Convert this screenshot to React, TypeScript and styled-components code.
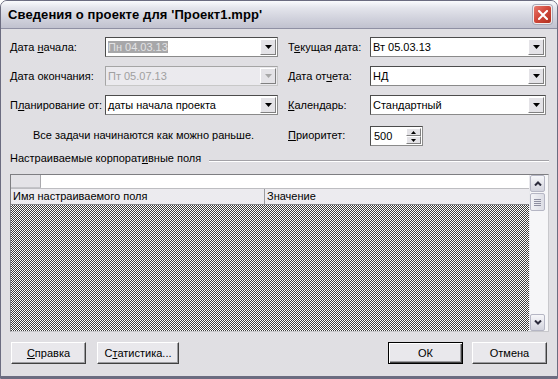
import styled, { createGlobalStyle } from "styled-components";

const GlobalStyle = createGlobalStyle`
  html, body { margin: 0; padding: 0; background: #fff; }
  body { font-family: "Liberation Sans", Arial, sans-serif; font-size: 11px; color: #000; }
  * { box-sizing: border-box; }
`;

function ComboArrow({ disabled }: { disabled?: boolean }) {
  return (
    <svg width="7" height="4" viewBox="0 0 7 4">
      <polygon points="0,0 7,0 3.5,4" fill={disabled ? "#a8a8a8" : "#000"} />
    </svg>
  );
}

function SpinArrow({ up }: { up?: boolean }) {
  return (
    <svg width="5" height="3" viewBox="0 0 5 3">
      <polygon points={up ? "0,3 5,3 2.5,0" : "0,0 5,0 2.5,3"} fill="#000" />
    </svg>
  );
}

function Chevron({ up }: { up?: boolean }) {
  return (
    <svg width="8" height="5" viewBox="0 0 8 5">
      <polyline
        points={up ? "1,4.5 4,1.5 7,4.5" : "1,0.5 4,3.5 7,0.5"}
        fill="none"
        stroke="#2b2b3c"
        strokeWidth="2"
      />
    </svg>
  );
}

function CloseGlyph() {
  return (
    <svg width="10" height="10" viewBox="0 0 10 10">
      <path d="M1 1 L9 9 M9 1 L1 9" stroke="#fff" strokeWidth="2" strokeLinecap="square" />
    </svg>
  );
}

function Combo({
  value,
  disabled,
  selected,
}: {
  value: string;
  disabled?: boolean;
  selected?: boolean;
}) {
  return (
    <ComboBox $disabled={disabled}>
      <ComboText $disabled={disabled}>
        {selected ? <Selected>{value}</Selected> : value}
      </ComboText>
      <DropButton>
        <ComboArrow disabled={disabled} />
      </DropButton>
    </ComboBox>
  );
}

export default function App() {
  return (
    <>
      <GlobalStyle />
      <Window>
        <TitleBar>
          <Title>Сведения о проекте для 'Проект1.mpp'</Title>
          <CloseButton>
            <CloseGlyph />
          </CloseButton>
        </TitleBar>
        <Body>
          <Form>
            <Label>
              Дата <Key>н</Key>ачала:
            </Label>
            <Combo value="Пн 04.03.13" selected />
            <Label $right>
              Т<Key>е</Key>кущая дата:
            </Label>
            <Combo value="Вт 05.03.13" />

            <Label>
              <Key>Д</Key>ата окончания:
            </Label>
            <Combo value="Пт 05.07.13" disabled />
            <Label $right>
              Дата от<Key>ч</Key>ета:
            </Label>
            <Combo value="НД" />

            <Label>
              П<Key>л</Key>анирование от:
            </Label>
            <Combo value="даты начала проекта" />
            <Label $right>
              <Key>К</Key>алендарь:
            </Label>
            <Combo value="Стандартный" />

            <Note>Все задачи начинаются как можно раньше.</Note>
            <Label $right>
              <Key>П</Key>риоритет:
            </Label>
            <SpinBox>
              <SpinText>500</SpinText>
              <SpinButtons>
                <SpinButton>
                  <SpinArrow up />
                </SpinButton>
                <SpinButton>
                  <SpinArrow />
                </SpinButton>
              </SpinButtons>
            </SpinBox>
          </Form>

          <GroupHeader>
            <span>
              Настраиваемые корпорат<Key>и</Key>вные поля
            </span>
            <GroupLine />
          </GroupHeader>

          <Table>
            <TableMain>
              <BlankRow>
                <CornerCell />
              </BlankRow>
              <HeaderRow>
                <HeaderCell $width={254}>Имя настраиваемого поля</HeaderCell>
                <HeaderCell>Значение</HeaderCell>
              </HeaderRow>
              <Hatch />
            </TableMain>
            <ScrollBar>
              <ScrollButton>
                <Chevron up />
              </ScrollButton>
              <Thumb>
                <Grip />
                <Grip />
                <Grip />
                <Grip />
              </Thumb>
              <ScrollSpacer />
              <ScrollButton>
                <Chevron />
              </ScrollButton>
            </ScrollBar>
          </Table>

          <Footer>
            <ButtonGroup $gap={11}>
              <Button $width={75}>
                <Key>С</Key>правка
              </Button>
              <Button $width={82}>
                С<Key>т</Key>атистика...
              </Button>
            </ButtonGroup>
            <ButtonGroup $gap={9}>
              <Button $width={75} $default>
                ОК
              </Button>
              <Button $width={75}>Отмена</Button>
            </ButtonGroup>
          </Footer>
        </Body>
      </Window>
    </>
  );
}

const Window = styled.div`
  width: 558px;
  height: 379px;
  display: flex;
  flex-direction: column;
  background: #e0dfe3;
  border: 1px solid #6b6c80;
  border-radius: 7px 7px 0 0;
  overflow: hidden;
`;

const TitleBar = styled.div`
  height: 28px;
  flex: none;
  display: flex;
  align-items: center;
  justify-content: space-between;
  padding: 0 5px 0 7px;
  background: linear-gradient(#fafbfd 0%, #e4e5ec 25%, #d3d4de 60%, #c1c2cf 100%);
  border-bottom: 1px solid #8f90a3;
`;

const Title = styled.div`
  font-family: "Liberation Sans", Arial, sans-serif;
  font-size: 13px;
  font-weight: bold;
  color: #000;
  letter-spacing: 0.1px;
`;

const CloseButton = styled.div`
  width: 19px;
  height: 19px;
  display: flex;
  align-items: center;
  justify-content: center;
  border-radius: 3px;
  border: 1px solid #f4eeee;
  background: linear-gradient(135deg, #e77a6e 0%, #d2493c 45%, #b0301f 100%);
  box-shadow: 0 0 0 1px #a9a9b8;
`;

const Body = styled.div`
  flex: 1;
  display: flex;
  flex-direction: column;
  padding: 8px 8px 12px 9px;
  border-bottom: 2px solid #6b6c80;
`;

const Form = styled.div`
  display: grid;
  grid-template-columns: 95px 173px 92px 176px;
  grid-template-rows: 20px 20px 20px 22px;
  row-gap: 9px;
  align-items: center;
`;

const Label = styled.div<{ $right?: boolean }>`
  padding-left: ${(p) => (p.$right ? "10px" : "0")};
  white-space: nowrap;
`;

const Key = styled.span`
  text-decoration: underline;
`;

const ComboBox = styled.div<{ $disabled?: boolean }>`
  height: 20px;
  display: flex;
  align-items: center;
  padding: 1px;
  border: 1px solid;
  border-color: ${(p) =>
    p.$disabled ? "#a5a5a5 #c8c8c8 #c8c8c8 #a5a5a5" : "#4c4c4c #8a8a8a #8a8a8a #4c4c4c"};
  background: ${(p) => (p.$disabled ? "#ebeaee" : "#fff")};
`;

const ComboText = styled.div<{ $disabled?: boolean }>`
  flex: 1;
  padding-left: 1px;
  color: ${(p) => (p.$disabled ? "#a0a0a0" : "#000")};
  white-space: nowrap;
  overflow: hidden;
`;

const Selected = styled.span`
  background: #a7a7a9;
  color: #e2e2e4;
  padding: 1px 0;
`;

const DropButton = styled.div`
  width: 16px;
  height: 16px;
  flex: none;
  display: flex;
  align-items: center;
  justify-content: center;
  background: #e4e3e7;
  border: 1px solid;
  border-color: #fff #808080 #808080 #fff;
`;

const Note = styled.div`
  grid-column: 1 / 3;
  padding-left: 23px;
  white-space: nowrap;
`;

const SpinBox = styled.div`
  width: 53px;
  height: 20px;
  align-self: end;
  display: flex;
  padding: 1px;
  border: 1px solid;
  border-color: #4c4c4c #8a8a8a #8a8a8a #4c4c4c;
  background: #fff;
`;

const SpinText = styled.div`
  flex: 1;
  padding-left: 2px;
  line-height: 16px;
`;

const SpinButtons = styled.div`
  width: 15px;
  display: flex;
  flex-direction: column;
`;

const SpinButton = styled.div`
  flex: 1;
  display: flex;
  align-items: center;
  justify-content: center;
  background: #e4e3e7;
  border: 1px solid;
  border-color: #fff #808080 #808080 #fff;
`;

const GroupHeader = styled.div`
  margin-top: 5px;
  height: 14px;
  display: flex;
  align-items: center;
  gap: 8px;
  white-space: nowrap;
`;

const GroupLine = styled.div`
  flex: 1;
  margin-top: 6px;
  border-top: 1px solid #a3a2a7;
  border-bottom: 1px solid #fff;
`;

const Table = styled.div`
  margin-top: 9px;
  flex: 1;
  display: flex;
  border: 1px solid;
  border-color: #7e7e82 #c8c8cc #c8c8cc #7e7e82;
  background: #fff;
  min-height: 0;
`;

const TableMain = styled.div`
  flex: 1;
  display: flex;
  flex-direction: column;
`;

const BlankRow = styled.div`
  height: 13px;
  display: flex;
  background: #fff;
`;

const CornerCell = styled.div`
  width: 30px;
  background: #e4e3e7;
  border-right: 1px solid #a9a9ad;
  border-bottom: 1px solid #c4c4c8;
`;

const HeaderRow = styled.div`
  height: 17px;
  display: flex;
  background: #ecebef;
  border-top: 1px solid #bdbdc1;
  border-bottom: 1px solid #88888c;
`;

const HeaderCell = styled.div<{ $width?: number }>`
  width: ${(p) => (p.$width ? `${p.$width}px` : "auto")};
  flex: ${(p) => (p.$width ? "none" : "1")};
  padding-left: 2px;
  line-height: 15px;
  border-right: ${(p) => (p.$width ? "1px solid #9a9a9e" : "none")};
  white-space: nowrap;
`;

const Hatch = styled.div`
  flex: 1;
  background-color: #fff;
  background-image: repeating-conic-gradient(#3c3c3c 0% 25%, #ffffff 0% 50%);
  background-size: 2px 2px;
`;

const ScrollBar = styled.div`
  width: 19px;
  display: flex;
  flex-direction: column;
  padding-right: 3px;
  background: #f6f6f8;
  border-left: 1px solid #e8e8ec;
`;

const ScrollButton = styled.div`
  height: 17px;
  display: flex;
  align-items: center;
  justify-content: center;
  border: 1px solid #b5b6c4;
  border-radius: 2px;
  background: linear-gradient(#f7f7fa, #d2d3dd);
`;

const Thumb = styled.div`
  margin-top: 1px;
  height: 18px;
  display: flex;
  flex-direction: column;
  align-items: center;
  justify-content: center;
  gap: 1px;
  border: 1px solid #b5b6c4;
  border-radius: 2px;
  background: linear-gradient(90deg, #f3f3f7, #dcdde5);
`;

const Grip = styled.div`
  width: 7px;
  height: 1px;
  background: #8e8fa1;
`;

const ScrollSpacer = styled.div`
  flex: 1;
`;

const Footer = styled.div`
  margin-top: 10px;
  height: 22px;
  display: flex;
  justify-content: space-between;
  padding: 0 2px 0 1px;
`;

const ButtonGroup = styled.div<{ $gap: number }>`
  display: flex;
  gap: ${(p) => p.$gap}px;
`;

const Button = styled.div<{ $width: number; $default?: boolean }>`
  width: ${(p) => p.$width}px;
  height: 22px;
  display: flex;
  align-items: center;
  justify-content: center;
  background: #e9e8ec;
  border: 1px solid;
  border-color: ${(p) =>
    p.$default ? "#000" : "#ffffff #404040 #404040 #ffffff"};
  box-shadow: ${(p) =>
    p.$default
      ? "inset 1px 1px #fff, inset -1px -1px #404040, inset -2px -2px #9c9ca0"
      : "inset -1px -1px #9c9ca0"};
  white-space: nowrap;
`;
